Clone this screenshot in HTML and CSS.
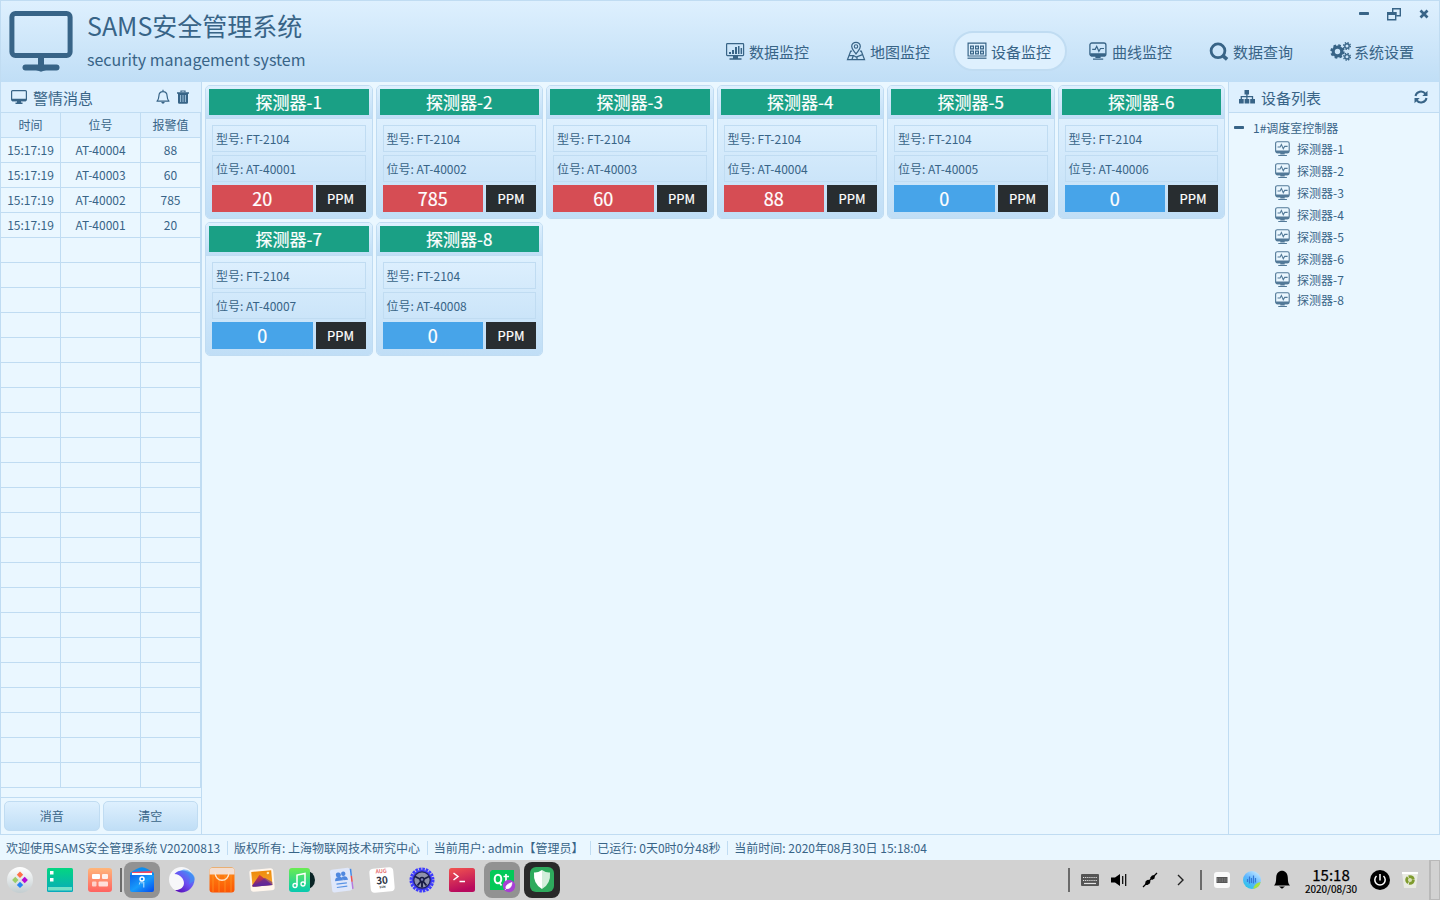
FILE: index.html
```html
<!DOCTYPE html>
<html lang="zh-CN">
<head>
<meta charset="utf-8">
<title>SAMS安全管理系统</title>
<link rel="stylesheet" href="styles.css">
</head>
<body>
<svg class="sprite" aria-hidden="true">
  <defs>
    <linearGradient id="gTerm" x1="0" y1="0" x2="0.3" y2="1"><stop offset="0" stop-color="#f2554e"/><stop offset="1" stop-color="#b80a5e"/></linearGradient>
    <linearGradient id="gDesk" x1="0" y1="0" x2="0" y2="1"><stop offset="0" stop-color="#04d680"/><stop offset="1" stop-color="#08a9bd"/></linearGradient>
    <linearGradient id="gMulti" x1="0" y1="0" x2="0" y2="1"><stop offset="0" stop-color="#ffb67a"/><stop offset="1" stop-color="#ff6260"/></linearGradient>
    <linearGradient id="gFile" x1="0" y1="0" x2="1" y2="1"><stop offset="0" stop-color="#0b63e8"/><stop offset=".5" stop-color="#179bfb"/><stop offset="1" stop-color="#0449ee"/></linearGradient>
    <linearGradient id="gWave" x1="1" y1="0" x2="0.2" y2="1"><stop offset="0" stop-color="#3aa6f5"/><stop offset=".55" stop-color="#6b4ff2"/><stop offset="1" stop-color="#5a10b8"/></linearGradient>
    <linearGradient id="gShop" x1="0" y1="0" x2="0" y2="1"><stop offset="0" stop-color="#ff8d14"/><stop offset="1" stop-color="#fb5405"/></linearGradient>
    <linearGradient id="gPic" x1="0" y1="0" x2="0" y2="1"><stop offset="0" stop-color="#ee8a0b"/><stop offset="1" stop-color="#f7a72e"/></linearGradient>
    <linearGradient id="gMount" x1="0" y1="0" x2="0" y2="1"><stop offset="0" stop-color="#e3402e"/><stop offset="1" stop-color="#5a1f9e"/></linearGradient>
    <linearGradient id="gMusic" x1="0" y1="0" x2="0" y2="1"><stop offset="0" stop-color="#6aec51"/><stop offset="1" stop-color="#06c9b0"/></linearGradient>
    <linearGradient id="gBall" x1="0" y1="0" x2="0" y2="1"><stop offset="0" stop-color="#ffffff"/><stop offset="1" stop-color="#c3cdd0"/></linearGradient>
    <linearGradient id="gVoice" x1="1" y1="0" x2="0.3" y2="1"><stop offset="0" stop-color="#d9f3ff"/><stop offset=".6" stop-color="#5db5ff"/><stop offset="1" stop-color="#2bc5e8"/></linearGradient>
  </defs>
  <symbol id="i-logo" viewBox="0 0 64 62"><rect x="2.9" y="3.4" width="58.200" height="42.200" rx="3.500" fill="none" stroke="currentColor" stroke-width="5"/><path d="M29 47h6v9h-6z" fill="currentColor"/><path d="M16.500 57.500h31" stroke="currentColor" stroke-width="6" stroke-linecap="round"/><path d="M27 60h10l-5 1.800z" fill="currentColor"/></symbol>
  <symbol id="i-monitor" viewBox="0 0 16 14"><rect x=".6" y=".6" width="14.800" height="10" rx="1" fill="none" stroke="currentColor" stroke-width="1.200"/><path d="M1 8.700h14v2.500H1zM6 11h4v2H6zM4.500 12.500h7v1.500h-7z" fill="currentColor"/></symbol>
  <symbol id="i-bell" viewBox="0 0 14 16"><path d="M1 12.2C2.7 10.8 2.8 9 2.900 7 3 4.400 4.500 2.700 7 2.700s4 1.700 4.100 4.300c.1 2 .2 3.800 1.900 5.200zM7 .7v2" fill="none" stroke="currentColor" stroke-width="1.200" stroke-linejoin="round"/><path d="M5.300 13h3.400c-.3 2.300-3.100 2.300-3.400 0z" fill="currentColor"/></symbol>
  <symbol id="i-trash" viewBox="0 0 12 14"><path d="M0 2.200h12v1.600H0zM1 3.500h10v9q0 1.200-1.200 1.200H2.200Q1 13.700 1 12.500z" fill="currentColor"/><path d="M4 2.300V1h4v1.300" fill="none" stroke="currentColor" stroke-width="1.200"/><path d="M3.600 5v7M6 5v7M8.400 5v7" stroke="#bcdcf2" stroke-width=".8"/></symbol>
  <symbol id="i-data" viewBox="0 0 20 20"><rect x="1.600" y="2.600" width="17" height="12" rx=".8" fill="none" stroke="currentColor" stroke-width="1.200"/><path d="M4 11h2v2H4zM7 9h2v4H7zM10 6h2v7h-2zM13 5h1.500v8H13zM15.600 7h1.500v6h-1.500zM8 15h5v2.200H8zM4.500 17.300h12v1.500h-12z" fill="currentColor"/></symbol>
  <symbol id="i-map" viewBox="0 0 20 20"><path d="M10 13C7.500 9.500 5.700 8 5.700 5.600a4.300 4.300 0 0 1 8.600 0C14.300 8 12.500 9.500 10 13zM6.100 10H4.700L1.500 18.500h17L15.300 10h-1.400M3.100 14.500h4.500l2.500 1.500 6.500-2.300M7.300 14.500l-1.300 4M11 15.500v3" fill="none" stroke="currentColor" stroke-width="1.250"/><circle cx="10" cy="5.500" r="1.700" fill="none" stroke="currentColor" stroke-width="1.100"/></symbol>
  <symbol id="i-device" viewBox="0 0 20 20"><path d="M1.100 2.100h17.800v12.900H1.100z" fill="none" stroke="currentColor" stroke-width="1.200"/><path d="M.5 17.200h19" stroke="currentColor" stroke-width="1.200"/><path d="M3.600 5.100h2.800v2.800H3.600zM8.600 5.100h2.800v2.800H8.600zM13.600 5.100h2.800v2.800h-2.800zM3.600 10.100h2.800v2.800H3.600zM8.600 10.100h2.800v2.800H8.600zM13.600 10.100h2.800v2.800h-2.800z" fill="none" stroke="currentColor" stroke-width="1.200"/></symbol>
  <symbol id="i-curve" viewBox="0 0 20 20"><rect x="1.900" y="2" width="16" height="12.900" rx="2" fill="none" stroke="currentColor" stroke-width="1.300"/><path d="M2.200 12.300h15.500v1.700q0 1-1 1.500H3.200q-1-.5-1-1.500zM7.400 15.500h5.200v1.600H7.400zM5 17.500h10.200v1.200H5z" fill="currentColor"/><path d="M4.200 8.300h3L8.700 5.300l2.200 5 1.600-2.800h3.500" fill="none" stroke="currentColor" stroke-width="1.200"/></symbol>
  <symbol id="i-search" viewBox="0 0 20 20"><circle cx="9" cy="9.800" r="6.900" fill="none" stroke="currentColor" stroke-width="2.800"/><path d="M13.500 14.300l4.600 4" stroke="currentColor" stroke-width="3.600"/></symbol>
  <symbol id="i-gears" viewBox="0 0 22 20"><circle cx="7.500" cy="10.500" r="4.300" fill="none" stroke="currentColor" stroke-width="3.200"/><circle cx="7.500" cy="10.500" r="6.200" fill="none" stroke="currentColor" stroke-width="2" stroke-dasharray="2.600 2.270"/><g fill="none" stroke="currentColor"><circle cx="17" cy="5" r="2.200" stroke-width="1.400"/><circle cx="17" cy="5" r="3.400" stroke-width="1.300" stroke-dasharray="1.400 1.270"/><circle cx="17" cy="15.800" r="2.200" stroke-width="1.400"/><circle cx="17" cy="15.800" r="3.400" stroke-width="1.300" stroke-dasharray="1.400 1.270"/></g></symbol>
  <symbol id="i-min" viewBox="0 0 14 14"><rect x="2" y="5" width="10" height="3" rx=".8" fill="currentColor"/></symbol>
  <symbol id="i-restore" viewBox="0 0 14 14"><path d="M5.700 5V1.700h7.600v7H9.500M.7 5.700h8v7.100h-8z" fill="none" stroke="currentColor" stroke-width="1.400"/><path d="M0 5h9.500v3H0z" fill="currentColor"/></symbol>
  <symbol id="i-close" viewBox="0 0 14 14"><path d="M3.500 3.500l7 7M10.500 3.500l-7 7" stroke="currentColor" stroke-width="2.700"/></symbol>
  <symbol id="i-tree" viewBox="0 0 16 14"><path d="M5.500 0h4.500v4.500H5.500zM0 9h4.700v4.500H0zM5.600 9h4.700v4.500H5.600zM11.200 9H16v4.500h-4.800z" fill="currentColor"/><path d="M7.900 4v5M2.300 9V6.700h11.200V9" fill="none" stroke="currentColor" stroke-width="1.300"/></symbol>
  <symbol id="i-refresh" viewBox="0 0 14 14"><path d="M1.500 6A5.500 5.500 0 0 1 11.300 3.700M12.500 8A5.500 5.500 0 0 1 2.700 10.300" fill="none" stroke="currentColor" stroke-width="2"/><path d="M13.500.8V6H8.300zM.5 13.200V8h5.200z" fill="currentColor"/></symbol>

  <symbol id="d-launcher" viewBox="0 0 28 28"><circle cx="14" cy="14" r="13" fill="url(#gBall)"/><path d="M14 5.500l3.200 3.200L14 11.900l-3.200-3.200z" fill="#ff7049"/><path d="M9.300 10.800l3.200 3.200-3.200 3.200L6.100 14z" fill="#9cce67"/><path d="M18.700 10.800l3.200 3.200-3.200 3.200-3.200-3.200z" fill="#b609d4"/><path d="M14 15.700l3.200 3.200-3.200 3.200-3.200-3.200z" fill="#2583f4"/></symbol>
  <symbol id="d-desktop" viewBox="0 0 28 28"><rect x="1" y="2" width="26" height="24" rx="1.500" fill="url(#gDesk)"/><path d="M4 5h3.500v3.500H4zM4 12h3.500v3.500H4z" fill="#fff"/><rect x="2" y="21" width="24" height="3.500" fill="#74e0c8"/></symbol>
  <symbol id="d-multi" viewBox="0 0 28 28"><rect x="2" y="2" width="24" height="24" rx="3" fill="url(#gMulti)"/><g fill="#fff"><rect x="6" y="8" width="8" height="5" rx="1"/><rect x="16" y="8" width="6" height="5" rx="1" opacity=".85"/><rect x="6" y="15.500" width="4.500" height="5" rx="1" opacity=".65"/><rect x="12.500" y="15.500" width="9.500" height="5" rx="1" opacity=".75"/></g></symbol>
  <symbol id="d-files" viewBox="0 0 28 28"><path d="M2 7Q9 2 14 1.300Q19 2 26 7v5H2z" fill="#0d8dee"/><path d="M4 6l20-1v3H4z" fill="#f3475f"/><path d="M4 7l20 0v3H4z" fill="#fff"/><path d="M2 9h24v15q0 2-2 2H4q-2 0-2-2z" fill="url(#gFile)"/><circle cx="14" cy="13" r="2" fill="none" stroke="#fff" stroke-width="1.500"/><path d="M14 15v2.500M15.800 16v5.500M12.300 15.500l-1 3" stroke="#bfe4ff" stroke-width="1"/></symbol>
  <symbol id="d-browser" viewBox="0 0 28 28"><circle cx="13.500" cy="13.500" r="12.500" fill="#f7f7f9"/><path d="M6.500 8C12 1 27 5 26.500 14C26 24 14 30 7 24C20 24 18 9 6.500 8z" fill="url(#gWave)"/><path d="M12 5c8-1 12 5 9 13 5-2 6-5 5.500-7C24 5 17 1 12 5z" fill="#3e91f4" opacity=".6"/></symbol>
  <symbol id="d-shop" viewBox="0 0 28 28"><rect x="1.500" y="1.500" width="25" height="25" rx="3" fill="url(#gShop)"/><path d="M1.500 8.500V4q0-2 2-2h21q2 0 2 2v4.500z" fill="#f2ded2"/><path d="M5 9v17M11 9v17M17 9v17M23 9v17" stroke="#ff9c27" stroke-width="2" opacity=".35"/><path d="M7 6c0 11 14 11 14 0" fill="none" stroke="#ffe4c9" stroke-width="1.300"/></symbol>
  <symbol id="d-album" viewBox="0 0 28 28"><g transform="rotate(-5 14 14)"><rect x="2" y="3" width="24" height="22" rx="3" fill="#fff6ed"/><rect x="4" y="5" width="20" height="15" fill="url(#gPic)"/><path d="M4 18.500l8-10 12 11.500H4z" fill="url(#gMount)"/><path d="M13 15l4-3 7 5v3H4z" fill="#5c2b9c" opacity=".6"/><circle cx="20.500" cy="7.500" r="1.300" fill="#ffe9a9"/></g></symbol>
  <symbol id="d-music" viewBox="0 0 28 28"><circle cx="17.500" cy="14" r="9.500" fill="#092425"/><rect x="1" y="2" width="21" height="24" rx="3" fill="url(#gMusic)"/><path d="M9 19.500V9l8-1.500V18" fill="none" stroke="#fff" stroke-width="1.500"/><circle cx="7" cy="19.500" r="2" fill="none" stroke="#fff" stroke-width="1.300"/><circle cx="15" cy="18" r="2" fill="none" stroke="#fff" stroke-width="1.300"/></symbol>
  <symbol id="d-contacts" viewBox="0 0 28 28"><g transform="rotate(-7 14 14)"><path d="M22 4h2.500v7H22z" fill="#4189e8"/><path d="M22 11h2.500v6H22z" fill="#f04f50"/><path d="M22 17h2.500v7H22z" fill="#b67bdc"/><rect x="3" y="2.500" width="20" height="23" rx="2" fill="#dfe7fa"/><g fill="#5088df"><circle cx="11" cy="8.500" r="2.500"/><circle cx="16" cy="8" r="2.200"/><path d="M7 14.500q0-4 4-4t4 4zM14 11q5.500-1.500 6 3.500h-4.500z"/></g><path d="M8 17.500h10.500M8 20.800h10.500" stroke="#5a94e5" stroke-width="1.200"/></g></symbol>
  <symbol id="d-clock" viewBox="0 0 28 28"><circle cx="14" cy="14" r="11.300" fill="none" stroke="#3d3bff" stroke-width="2.400" stroke-dasharray="2.600 .95"/><circle cx="14" cy="14" r="10.300" fill="#3b38f5"/><circle cx="14" cy="14" r="8.200" fill="#8f92aa" stroke="#20225e" stroke-width="1.200"/><path d="M14 14L7 10.500M14 14l7-3.500M14 14v7.500M14 14l-4.500 5.500M14 14l4.500 5.500" stroke="#191c44" stroke-width="1.900"/><circle cx="14" cy="13.500" r="2" fill="#7d80b6" stroke="#191c44" stroke-width="1.500"/></symbol>
  <symbol id="d-terminal" viewBox="0 0 28 28"><rect x="1" y="2" width="26" height="24" rx="2.500" fill="url(#gTerm)"/><path d="M5.500 7l4.500 3.500-4.500 3.500M11.500 15.500H17" fill="none" stroke="#fff" stroke-width="1.500"/></symbol>
  <symbol id="d-qt" viewBox="0 0 28 28"><path d="M4 4h22v20H2V6z" fill="#04c959"/><g fill="none" stroke="#fff"><ellipse cx="10" cy="13" rx="3.300" ry="4.300" stroke-width="2"/><path d="M11 16l2.500 3.500M18 8v7q0 2 2.500 1.500M15.500 10.500H21" stroke-width="1.700"/></g><circle cx="21" cy="20" r="6.200" fill="#a83fd4"/><path d="M18 22.500q-1-4 6-6q-.5 7-6 6zM17 24l2-2" fill="#fff" stroke="#fff" stroke-width=".7"/></symbol>
  <symbol id="d-shield" viewBox="0 0 28 28"><rect x="2" y="1" width="24" height="25" rx="6" fill="#2eaa5d"/><path d="M14 4q4.500 3 8 2.500Q23 18 14 23z" fill="#d2eedb"/><path d="M14 4Q9.500 7 6 6.500 5 18 14 23z" fill="#fff"/></symbol>

  <symbol id="t-keyboard" viewBox="0 0 20 20"><rect x="1" y="4" width="18" height="12" rx="1" fill="#555"/><path d="M3 7.500h14M3 10.500h14" stroke="#e4e4e4" stroke-width="1.200" stroke-dasharray="1.200 .9"/><path d="M4 13.500h12" stroke="#e4e4e4" stroke-width="1.200"/></symbol>
  <symbol id="t-volume" viewBox="0 0 20 20"><path d="M1 7.500h4l5-3.500v12l-5-3.500H1z"/><path d="M12.700 6v8M15.700 4v12" stroke="#000" stroke-width="1.200"/></symbol>
  <symbol id="t-plug" viewBox="0 0 20 20"><path d="M3 17l14-14" stroke="#000" stroke-width="1.200"/><path d="M5.500 11.500q2-2.500 3.500-1.500l1.500 1.500q0 2-3 3.500l-2.500 0zM10 8l2-2.500 3-.5-.5 3.500-2.500 1.500z"/></symbol>
  <symbol id="t-chevron" viewBox="0 0 20 20"><path d="M8 5l5 5-5 5" fill="none" stroke="#222" stroke-width="1.400"/></symbol>
  <symbol id="t-ime" viewBox="0 0 20 20"><rect x="2" y="2" width="16" height="16" rx="3" fill="#fafafa"/><rect x="4.500" y="7" width="11" height="6" fill="#555"/><path d="M5 9h10M5 11h10" stroke="#bbb" stroke-width=".6" stroke-dasharray="1 .7"/></symbol>
  <symbol id="t-voice" viewBox="0 0 20 20"><circle cx="10" cy="10" r="9" fill="url(#gVoice)"/><path d="M11 18.900q6.500-1.200 7.700-7-6.200 1-7.700 7z" fill="#a7e340"/><path d="M5.500 9v3M7.500 6.500v7M9.500 8v5M11.500 5.500v8M13.500 8v4.500" stroke="#3478d5" stroke-width="1.200"/></symbol>
  <symbol id="t-bell" viewBox="0 0 20 20"><path d="M2 15.500c2-2 2-4 2.200-8C4.500 3 7 .8 10 .8s5.500 2.200 5.800 6.700c.2 4 .2 6 2.200 8zM7 16.500h6l-3 2.300z"/></symbol>
  <symbol id="t-power" viewBox="0 0 20 20"><circle cx="10" cy="10" r="10"/><path d="M6.500 6a5.200 5.200 0 1 0 7 0M10 4v6.500" fill="none" stroke="#fff" stroke-width="1.500"/></symbol>
  <symbol id="t-bin" viewBox="0 0 20 20"><path d="M2 2h16l-2 16H4z" fill="#e9ebe3"/><path d="M2 2h16v2H2z" fill="#fff"/><circle cx="10" cy="10" r="3.400" fill="#d9e0b8" stroke="#7f9c2e" stroke-width="2.800" stroke-dasharray="6.200 .92"/></symbol>
</svg>

<div class="app">
  <header class="header">
    <svg class="logo"><use href="#i-logo"/></svg>
    <div class="titles">
      <h1 class="title">SAMS安全管理系统</h1>
      <div class="subtitle">security management system</div>
    </div>
    <div class="header-right">
      <div class="win-buttons">
        <svg class="ic14"><use href="#i-min"/></svg>
        <svg class="ic14"><use href="#i-restore"/></svg>
        <svg class="ic14"><use href="#i-close"/></svg>
      </div>
      <nav class="nav">
        <a class="nav-item"><svg class="ic20"><use href="#i-data"/></svg>数据监控</a>
        <a class="nav-item"><svg class="ic20"><use href="#i-map"/></svg>地图监控</a>
        <a class="nav-item active"><svg class="ic20"><use href="#i-device"/></svg>设备监控</a>
        <a class="nav-item"><svg class="ic20"><use href="#i-curve"/></svg>曲线监控</a>
        <a class="nav-item"><svg class="ic20"><use href="#i-search"/></svg>数据查询</a>
        <a class="nav-item"><svg class="ic22"><use href="#i-gears"/></svg>系统设置</a>
      </nav>
    </div>
  </header>

  <main class="main">
    <aside class="left">
      <div class="panel-head">
        <svg class="head-ic"><use href="#i-monitor"/></svg>
        <span class="head-text">警情消息</span>
        <svg class="bell"><use href="#i-bell"/></svg>
        <svg class="trash"><use href="#i-trash"/></svg>
      </div>
      <div class="alarm-table" id="alarms">
        <div class="row row-head"><span>时间</span><span>位号</span><span>报警值</span></div>
      </div>
      <div class="actions">
        <button class="btn">消音</button>
        <button class="btn">清空</button>
      </div>
    </aside>

    <section class="cards" id="cards"></section>

    <aside class="right">
      <div class="panel-head">
        <svg class="head-ic"><use href="#i-tree"/></svg>
        <span class="head-text">设备列表</span>
        <svg class="refresh"><use href="#i-refresh"/></svg>
      </div>
      <div class="tree" id="tree">
        <div class="tree-root"><svg class="ic14"><use href="#i-min"/></svg><span>1#调度室控制器</span></div>
      </div>
    </aside>
  </main>

  <footer class="status">
    <span>欢迎使用SAMS安全管理系统 V20200813</span>
    <span>版权所有: 上海物联网技术研究中心</span>
    <span>当前用户: admin【管理员】</span>
    <span>已运行: 0天0时0分48秒</span>
    <span>当前时间: 2020年08月30日 15:18:04</span>
  </footer>
</div>

<div class="dock">
  <div class="slot"><svg><use href="#d-launcher"/></svg></div>
  <div class="slot"><svg><use href="#d-desktop"/></svg></div>
  <div class="slot"><svg><use href="#d-multi"/></svg></div>
  <i class="dock-sep tall"></i>
  <div class="slot"><div class="open"><svg><use href="#d-files"/></svg></div></div>
  <div class="slot"><svg><use href="#d-browser"/></svg></div>
  <div class="slot"><svg><use href="#d-shop"/></svg></div>
  <div class="slot"><svg><use href="#d-album"/></svg></div>
  <div class="slot"><svg><use href="#d-music"/></svg></div>
  <div class="slot"><svg><use href="#d-contacts"/></svg></div>
  <div class="slot"><div class="calendar"><b class="cal-month">AUG</b><b class="cal-day">30</b><b class="cal-week">SUN</b></div></div>
  <div class="slot"><svg><use href="#d-clock"/></svg></div>
  <div class="slot"><svg><use href="#d-terminal"/></svg></div>
  <div class="slot"><div class="open"><svg><use href="#d-qt"/></svg></div></div>
  <div class="slot"><div class="open dark"><svg><use href="#d-shield"/></svg></div></div>
  <div class="tray">
    <i class="dock-sep tall"></i>
    <div class="tray-slot first"><svg><use href="#t-keyboard"/></svg></div>
    <div class="tray-slot"><svg><use href="#t-volume"/></svg></div>
    <div class="tray-slot"><svg><use href="#t-plug"/></svg></div>
    <div class="tray-slot"><svg><use href="#t-chevron"/></svg></div>
    <i class="dock-sep short"></i>
    <div class="tray-slot second"><svg><use href="#t-ime"/></svg></div>
    <div class="tray-slot"><svg><use href="#t-voice"/></svg></div>
    <div class="tray-slot"><svg><use href="#t-bell"/></svg></div>
    <div class="clock"><div class="clock-time">15:18</div><div class="clock-date">2020/08/30</div></div>
    <div class="tray-slot"><svg><use href="#t-power"/></svg></div>
    <div class="tray-slot"><svg><use href="#t-bin"/></svg></div>
    <div class="show-desktop"></div>
  </div>
</div>
<script src="app.js"></script>
</body>
</html>
```
FILE: styles.css
```css
* { box-sizing: border-box; }
body {
  margin: 0; width: 1440px; height: 900px; overflow: hidden;
  font-family: "Noto Sans CJK SC", sans-serif; font-size: 12px; color: #386487;
}
svg { display: block; flex: none; }
.sprite { position: absolute; width: 0; height: 0; }
.ic14 { width: 14px; height: 14px; }
.ic20 { width: 20px; height: 20px; }
.ic22 { width: 22px; height: 20px; }

.app { display: flex; flex-direction: column; height: 860px; background: #eaf7ff; }
.header {
  height: 82px; flex: none; display: flex; padding-left: 8px;
  border: 1px solid #c0dcf2; border-bottom: 0;
  background: linear-gradient(#def0fe, #c0def6);
}
.logo { width: 64px; height: 62px; margin-top: 9px; }
.titles { padding: 3px 0 0 14px; white-space: nowrap; }
.title { margin: 0; font-size: 25px; font-weight: 400; line-height: 42px; }
.subtitle { font-size: 16px; line-height: 25px; margin-top: 1px; }
.header-right { margin-left: auto; padding-right: 9px; }
.win-buttons { display: flex; justify-content: flex-end; gap: 16px; height: 30px; padding: 6px 0 0; }
.win-buttons svg:last-child { margin-right: -1px; }
.nav { display: flex; gap: 7px; }
.nav-item {
  width: 114px; height: 40px; display: flex; align-items: center; justify-content: center;
  gap: 4px; padding-right: 2px; font-size: 15px; border: 2px solid transparent; border-radius: 20px; white-space: nowrap;
}
.nav-item svg { margin-top: 0; }
.nav-item .ic22 { margin-right: -2px; }
.nav-item.active { background: #def0fe; border-color: #c0dcf2; }

.main { flex: 1; display: flex; min-height: 0; border-bottom: 1px solid #c0dcf2; }
.left { width: 202px; display: flex; flex-direction: column; border: solid #c0dcf2; border-width: 0 1px; }
.panel-head {
  height: 31px; flex: none; display: flex; align-items: center; padding-left: 10px;
  background: #def0fe; border-bottom: 1px solid #c0dcf2;
}
.head-ic { width: 16px; height: 14px; margin-top: -1px; }
.head-text { font-size: 15px; margin: 2px 0 0 6px; line-height: 22px; }
.bell { width: 14px; height: 16px; margin-left: auto; }
.trash { width: 12px; height: 14px; margin: 0 12px 0 7px; }
.refresh { width: 14px; height: 14px; margin: 0 11px 0 auto; }

.alarm-table { flex: 1; }
.row { display: grid; grid-template-columns: 60px 80px 60px; height: 25px; line-height: 24px; text-align: center; }
.row span { border: solid #c0dcf2; border-width: 0 1px 1px 0; }
.row-head span { background: #def0fe; }
.actions { height: 37px; display: grid; grid-template-columns: 1fr 1fr; gap: 3px; padding: 3px; border-top: 1px solid #c0dcf2; }
.btn {
  height: 30px; padding: 0 0 2px; font: inherit; color: inherit; border: 1px solid #c0dcf2; border-radius: 5px;
  background: linear-gradient(#def0fe, #c0def6);
}

.cards {
  flex: 1; display: grid; grid-template-columns: repeat(6, minmax(0, 1fr)); grid-auto-rows: 134px;
  gap: 3px; padding: 3px;
}
.card { border: 1px solid #c0dcf2; border-radius: 5px; overflow: hidden; }
.card-head { height: 32px; padding: 3px; background: linear-gradient(#def0fe, #c0def6); }
.card-name { height: 26px; line-height: 26px; font-size: 17px; text-align: center; color: #fff; background: #1aa085; -webkit-text-stroke: .2px #fff; }
.card-body { height: 100px; padding: 6px; background: linear-gradient(#def0fe, #c0def6); border-top: 1px solid #c0dcf2; }
.field { height: 27px; line-height: 26px; padding-left: 3px; margin-bottom: 3px; border: 1px solid #c0dcf2; white-space: nowrap; }
.reading { display: flex; gap: 3px; height: 27px; line-height: 27px; text-align: center; color: #fff; -webkit-text-stroke: .2px #fff; }
.value { flex: 1; font-size: 18px; background: #47a4e9; }
.value.alarm { background: #d64d54; }
.unit { width: 50px; font-size: 13px; background: #282d30; }

.right { width: 212px; border: solid #c0dcf2; border-width: 0 1px; }
.tree { padding-top: 4px; }
.tree-root { height: 21px; line-height: 22px; display: flex; gap: 7px; padding-left: 3px; }
.tree-root svg { margin-top: 4px; }
.tree-item { height: 22px; line-height: 22px; display: flex; align-items: center; gap: 6px; padding-left: 45px; }
.tree-item svg { width: 17px; height: 17px; margin-top: -1px; opacity: .85; }
.tree-item:nth-last-child(-n+2) { height: 20px; line-height: 20px; }

.status { height: 25px; display: flex; align-items: center; padding-left: 6px; white-space: nowrap; }
.status span { line-height: 14px; padding-right: 6.7px; margin-right: 6px; border-right: 1px solid #c0dcf2; }
.status span:last-child { border: 0; }

.dock { height: 40px; display: flex; align-items: center; background: #d2d2d2; }
.slot { width: 40px; height: 40px; display: flex; align-items: center; justify-content: center; }
.slot svg { width: 28px; height: 28px; }
.open { width: 36px; height: 36px; border-radius: 8px; background: #929292; display: flex; align-items: center; justify-content: center; }
.open.dark { background: #292929; }
.dock-sep { width: 2px; background: #6b6b6b; }
.tall { height: 24px; }
.short { height: 20px; margin-left: 5px; }
.calendar {
  width: 24px; height: 24px; border-radius: 4px; background: #fff; transform: rotate(-5deg);
  display: flex; flex-direction: column; align-items: center; color: #2c3444;
}
.cal-month { font-size: 5.5px; line-height: 7px; color: #e25455; font-weight: 500; }
.cal-day { font-size: 10px; line-height: 10px; }
.cal-week { font-size: 3px; line-height: 4px; }
.tray { margin-left: auto; display: flex; align-items: center; color: #000; }
.tray-slot { width: 30px; height: 40px; display: flex; align-items: center; justify-content: center; }
.tray-slot svg { width: 20px; height: 20px; }
.first, .second { margin-left: 5px; }
.clock { width: 68px; text-align: center; }
.clock-time { font-size: 15px; line-height: 16px; margin-top: 1px; -webkit-text-stroke: .25px #000; }
.clock-date { font-size: 10px; line-height: 12px; -webkit-text-stroke: .2px #000; }
.show-desktop { width: 11px; height: 40px; margin-left: 4px; border: 1px solid #b9b9b9; border-left-width: 2px; }
```
FILE: app.js
```js
const alarms = [['AT-40004', 88], ['AT-40003', 60], ['AT-40002', 785], ['AT-40001', 20]];
const readings = [20, 785, 60, 88, 0, 0, 0, 0];
const ROWS = 26;

let rows = '';
for (let i = 0; i < ROWS; i++) {
  const a = alarms[i];
  rows += a
    ? `<div class="row"><span>15:17:19</span><span>${a[0]}</span><span>${a[1]}</span></div>`
    : '<div class="row"><span></span><span></span><span></span></div>';
}
document.getElementById('alarms').insertAdjacentHTML('beforeend', rows);

document.getElementById('cards').innerHTML = readings.map((v, i) => `
  <article class="card">
    <div class="card-head"><div class="card-name">探测器-${i + 1}</div></div>
    <div class="card-body">
      <div class="field">型号: FT-2104</div>
      <div class="field">位号: AT-4000${i + 1}</div>
      <div class="reading"><div class="value${v ? ' alarm' : ''}">${v}</div><div class="unit">PPM</div></div>
    </div>
  </article>`).join('');

document.getElementById('tree').insertAdjacentHTML('beforeend', readings.map((v, i) =>
  `<div class="tree-item"><svg><use href="#i-curve"/></svg><span>探测器-${i + 1}</span></div>`).join(''));
```
